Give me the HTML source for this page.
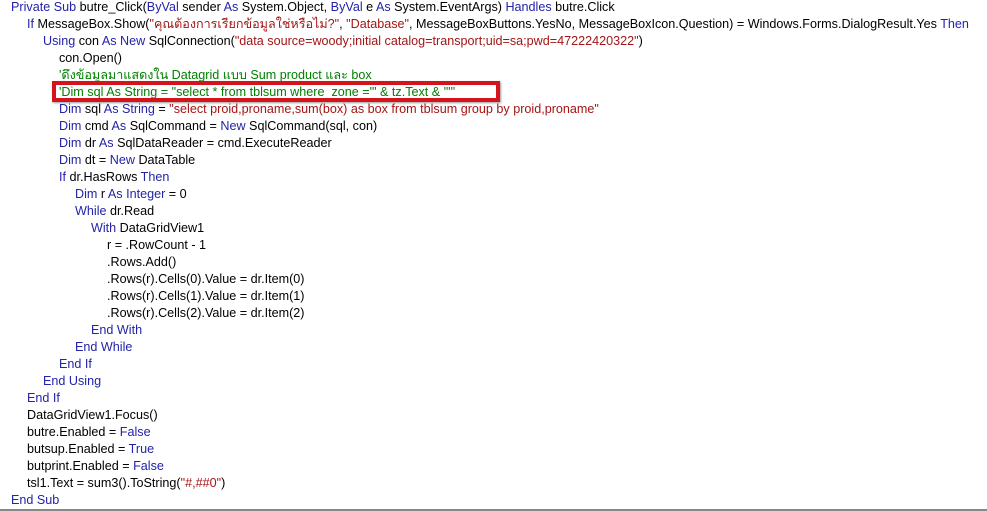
<!DOCTYPE html>
<html><head><meta charset="utf-8"><style>
html,body{margin:0;padding:0;background:#fff;width:987px;height:511px;overflow:hidden;position:relative}
.code{position:absolute;left:0;top:-1.5px;font-family:"Liberation Sans","Noto Sans CJK SC",sans-serif;font-size:12.6px;line-height:17px;color:#000}
.l{height:17px;white-space:pre}
.k{color:#2323a8}.s{color:#a31515}.c{color:#008000}
.box{position:absolute;left:52px;top:81px;width:440px;height:13px;border:4px solid #d4141a;box-shadow:1px 1px 2px rgba(0,0,0,.4)}
.bot{position:absolute;left:0;bottom:0;width:987px;height:2px;background:#888}
</style></head><body>
<div class="code"><div class="l" style="padding-left:11px"><span class="k">Private Sub</span> butre_Click(<span class="k">ByVal</span> sender <span class="k">As</span> System.Object, <span class="k">ByVal</span> e <span class="k">As</span> System.EventArgs) <span class="k">Handles</span> butre.Click</div><div class="l" style="padding-left:27px"><span class="k">If</span> MessageBox.Show(<span class="s">"คุณต้องการเรียกข้อมูลใช่หรือไม่?"</span>, <span class="s">"Database"</span>, MessageBoxButtons.YesNo, MessageBoxIcon.Question) = Windows.Forms.DialogResult.Yes <span class="k">Then</span></div><div class="l" style="padding-left:43px"><span class="k">Using</span> con <span class="k">As New</span> SqlConnection(<span class="s">"data source=woody;initial catalog=transport;uid=sa;pwd=47222420322"</span>)</div><div class="l" style="padding-left:59px">con.Open()</div><div class="l" style="padding-left:59px"><span class="c">'ดึงข้อมูลมาแสดงใน Datagrid แบบ Sum product และ box</span></div><div class="l" style="padding-left:59px"><span class="c">'Dim sql As String = "select * from tblsum where  zone ='" &amp; tz.Text &amp; "'"</span></div><div class="l" style="padding-left:59px"><span class="k">Dim</span> sql <span class="k">As String</span> = <span class="s">"select proid,proname,sum(box) as box from tblsum group by proid,proname"</span></div><div class="l" style="padding-left:59px"><span class="k">Dim</span> cmd <span class="k">As</span> SqlCommand = <span class="k">New</span> SqlCommand(sql, con)</div><div class="l" style="padding-left:59px"><span class="k">Dim</span> dr <span class="k">As</span> SqlDataReader = cmd.ExecuteReader</div><div class="l" style="padding-left:59px"><span class="k">Dim</span> dt = <span class="k">New</span> DataTable</div><div class="l" style="padding-left:59px"><span class="k">If</span> dr.HasRows <span class="k">Then</span></div><div class="l" style="padding-left:75px"><span class="k">Dim</span> r <span class="k">As Integer</span> = 0</div><div class="l" style="padding-left:75px"><span class="k">While</span> dr.Read</div><div class="l" style="padding-left:91px"><span class="k">With</span> DataGridView1</div><div class="l" style="padding-left:107px">r = .RowCount - 1</div><div class="l" style="padding-left:107px">.Rows.Add()</div><div class="l" style="padding-left:107px">.Rows(r).Cells(0).Value = dr.Item(0)</div><div class="l" style="padding-left:107px">.Rows(r).Cells(1).Value = dr.Item(1)</div><div class="l" style="padding-left:107px">.Rows(r).Cells(2).Value = dr.Item(2)</div><div class="l" style="padding-left:91px"><span class="k">End With</span></div><div class="l" style="padding-left:75px"><span class="k">End While</span></div><div class="l" style="padding-left:59px"><span class="k">End If</span></div><div class="l" style="padding-left:43px"><span class="k">End Using</span></div><div class="l" style="padding-left:27px"><span class="k">End If</span></div><div class="l" style="padding-left:27px">DataGridView1.Focus()</div><div class="l" style="padding-left:27px">butre.Enabled = <span class="k">False</span></div><div class="l" style="padding-left:27px">butsup.Enabled = <span class="k">True</span></div><div class="l" style="padding-left:27px">butprint.Enabled = <span class="k">False</span></div><div class="l" style="padding-left:27px">tsl1.Text = sum3().ToString(<span class="s">"#,##0"</span>)</div><div class="l" style="padding-left:11px"><span class="k">End Sub</span></div></div>
<div class="box"></div>
<div class="bot"></div>
</body></html>
